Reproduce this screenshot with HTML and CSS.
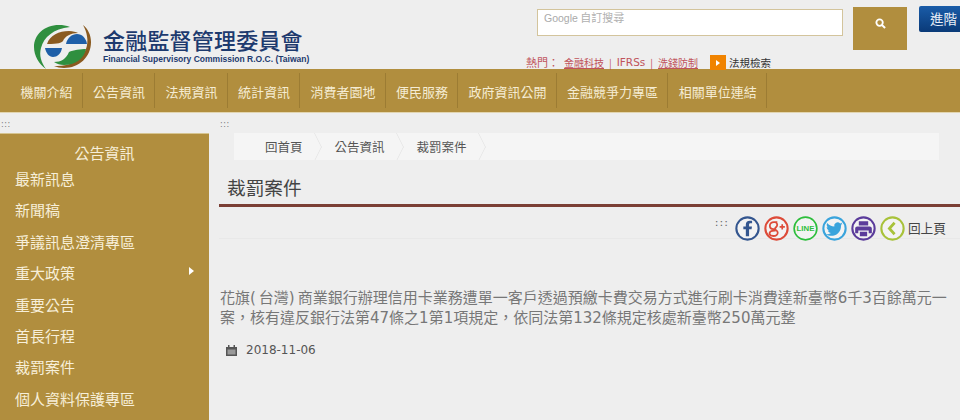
FILE: index.html
```html
<!DOCTYPE html>
<html lang="zh-Hant">
<head>
  <meta charset="UTF-8">
  <title>裁罰案件 - 金融監督管理委員會</title>
  <link rel="stylesheet" href="styles.css">
</head>
<body>
  <header class="header">
    <a class="brand" href="#">
      <svg class="brand-logo" width="62" height="46" viewBox="0 0 62 46">
        <path d="M26 1C11 1 1 11 1 23c0 9 5 17 12 22C8 38 6 31 8 24 11 13 20 5 37 3 33 1.500 30 1 26 1z" fill="#2f8f3f"/>
        <path d="M50 1c5 4 8 10 8 17 0 15-12 26-27 26-4 0-7-1-10-2 14 1 27-5 32-17 3-8 1-17-3-24z" fill="#8a5a20"/>
        <path d="M14 20c3-9 12-13 22-13 4 0 7 1 9 2-7 0-13 3-15 8-2 2-4 3-16 3z" fill="#8a5a20"/>
        <path d="M33 20c1-6 6-10 11-10 5 0 9 4 10 10z" fill="#1f5fa8"/>
        <path d="M12 24h17c-1 6-5 9-9 9-4 0-7-4-8-9z" fill="#1f5fa8"/>
        <path d="M21 38c7 0 12-3 15-10 4-2 12-3 17-3-2 10-11 16-22 16-4 0-7-1-10-3z" fill="#2f8f3f"/>
      </svg>
      <span class="brand-text">
        <span class="brand-zh">金融監督管理委員會</span>
        <span class="brand-en">Financial Supervisory Commission R.O.C. (Taiwan)</span>
      </span>
    </a>
    <div class="tools">
      <div class="search-row">
        <div class="search-input"><b>Google</b> 自訂搜尋</div>
        <button class="search-btn" aria-label="搜尋">
          <svg width="11" height="11" viewBox="0 0 12 12"><circle cx="5" cy="5" r="3.500" fill="none" stroke="#fff" stroke-width="2"/><path d="M7.500 7.500L11 11" stroke="#fff" stroke-width="2.200"/></svg>
        </button>
        <a class="advanced" href="#">進階</a>
      </div>
      <div class="hot-row">
        <span class="hot-label">熱門：</span>
        <a class="hot-link" href="#">金融科技</a><i>|</i>
        <a class="hot-link hot-latin" href="#">IFRSs</a><i>|</i>
        <a class="hot-link" href="#">洗錢防制</a>
        <span class="law-icon"></span>
        <a class="law-link" href="#">法規檢索</a>
      </div>
    </div>
  </header>

  <nav class="nav">
    <a href="#">機關介紹</a>
    <a href="#">公告資訊</a>
    <a href="#">法規資訊</a>
    <a href="#">統計資訊</a>
    <a href="#">消費者園地</a>
    <a href="#">便民服務</a>
    <a href="#">政府資訊公開</a>
    <a href="#">金融競爭力專區</a>
    <a href="#">相關單位連結</a>
  </nav>

  <div class="page">
    <aside class="side">
      <div class="dots">:::</div>
      <div class="side-box">
        <h2>公告資訊</h2>
        <ul>
          <li><a href="#">最新訊息</a></li>
          <li><a href="#">新聞稿</a></li>
          <li><a href="#">爭議訊息澄清專區</a></li>
          <li class="has-sub"><a href="#">重大政策</a></li>
          <li><a href="#">重要公告</a></li>
          <li><a href="#">首長行程</a></li>
          <li><a href="#">裁罰案件</a></li>
          <li><a href="#">個人資料保護專區</a></li>
        </ul>
      </div>
    </aside>

    <main class="main">
      <div class="dots">:::</div>
      <ol class="crumbs">
        <li><a href="#">回首頁</a></li>
        <li><a href="#">公告資訊</a></li>
        <li><a href="#">裁罰案件</a></li>
      </ol>
      <h1>裁罰案件</h1>
      <div class="share">
        <span class="share-dots">:::</span>
        <svg class="ico" viewBox="0 0 24 24"><circle cx="12" cy="12" r="10.700" fill="#f3f3f3" stroke="#34568f" stroke-width="2"/><path d="M13.500 19.500v-6.700h2.400l.4-2.800h-2.800V8.300c0-.9.300-1.400 1.400-1.400h1.500V4.500h-2.100c-2.600 0-3.900 1.500-3.900 3.600V10H8v2.800h2.400v6.700z" fill="#34568f"/></svg>
        <svg class="ico" viewBox="0 0 24 24"><circle cx="12" cy="12" r="10.700" fill="#f3f3f3" stroke="#dd4b39" stroke-width="2"/><path d="M12.800 5.800H9.500C7 5.800 5.600 7.500 5.600 9.300c0 1.900 1.500 3.200 3.400 3.200l.9 1.600c-2.700.1-4.600 1.100-4.600 2.800 0 1.400 1.600 2.300 3.700 2.300 2.700 0 4.200-1.500 4.200-3.100 0-2.300-2.700-2.600-2.700-3.900 0-1.100 2.200-1.500 2.200-3.800 0-1.200-.7-2-1.500-2.500" fill="none" stroke="#dd4b39" stroke-width="1.700"/><path d="M15 10.500h5M17.500 8v5" stroke="#dd4b39" stroke-width="1.600"/></svg>
        <svg class="ico" viewBox="0 0 24 24"><circle cx="12" cy="12" r="10.900" fill="#f3f3f3" stroke="#2dbe3c" stroke-width="1.600"/><text class="line-text" x="12" y="14.800" text-anchor="middle">LINE</text></svg>
        <svg class="ico" viewBox="0 0 24 24"><circle cx="12" cy="12" r="10.700" fill="#f3f3f3" stroke="#3aa4dc" stroke-width="2"/><path d="M20 7.600c-.6.300-1.200.5-1.900.6.700-.4 1.200-1.100 1.400-1.900-.6.400-1.300.7-2.100.8a3.300 3.300 0 0 0-5.600 3C9.100 9.900 6.700 8.600 5 6.600c-.9 1.500-.5 3.500 1 4.400-.5 0-1-.2-1.500-.4 0 1.600 1.100 3 2.600 3.300-.5.100-1 .1-1.500 0 .4 1.300 1.600 2.200 3 2.300-1.400 1.100-3.100 1.500-4.800 1.300 5.300 3.400 14.700 1 14.500-8.700.7-.5 1.300-1.100 1.700-1.200z" fill="#3aa4dc"/></svg>
        <svg class="ico" viewBox="0 0 24 24"><circle cx="12" cy="12" r="10.700" fill="#f3f3f3" stroke="#5b3c9b" stroke-width="2"/><path d="M7.500 5h9v4h-9zM6 10h12c1 0 2 .8 2 2v4.500h-3V14H7v2.500H4V12c0-1.200 1-2 2-2zM8.500 15h7v4.500h-7z" fill="#5b3c9b"/></svg>
        <svg class="ico" viewBox="0 0 24 24"><circle cx="12" cy="12" r="10.700" fill="#f3f3f3" stroke="#a8c23a" stroke-width="2"/><path d="M14 6.500L9 12l5 5.500" fill="none" stroke="#a8c23a" stroke-width="2.600"/></svg>
        <a class="back" href="#">回上頁</a>
      </div>
      <article class="article">
        <p class="summary">花旗(&thinsp;台灣)&thinsp;商業銀行辦理信用卡業務遭單一客戶透過預繳卡費交易方式進行刷卡消費達新臺幣6千3百餘萬元一案，核有違反銀行法第47條之1第1項規定，依同法第132條規定核處新臺幣250萬元整</p>
        <p class="date">
          <svg width="11" height="11" viewBox="0 0 11 11"><path d="M0 2h2V0h1.500v2h4V0H9v2h2v9H0z" fill="#555"/><path d="M1.500 4.500h8v5h-8z" fill="#999"/></svg>
          <span>2018-11-06</span>
        </p>
      </article>
    </main>
  </div>
</body>
</html>
```

FILE: styles.css
```css
* {
  margin: 0;
  padding: 0;
  box-sizing: border-box;
}

html,
body {
  height: 420px;
  overflow: hidden;
}

body {
  font-family: "DejaVu Sans", "Noto Sans CJK TC", sans-serif;
  background: #eeeeee;
  color: #555;
}

a {
  color: inherit;
  text-decoration: none;
}

ul,
ol {
  list-style: none;
}

.header {
  height: 69px;
  display: flex;
  justify-content: space-between;
}

.brand {
  display: flex;
  gap: 8px;
  padding: 24px 0 0 33px;
}

.brand-text {
  display: flex;
  flex-direction: column;
  padding-top: 3px;
}

.brand-zh {
  font-family: "Noto Sans CJK TC", sans-serif;
  font-size: 22px;
  line-height: 24px;
  font-weight: 500;
  letter-spacing: .2px;
  color: #1d3a6e;
  white-space: nowrap;
}

.brand-en {
  font-family: "Liberation Sans", sans-serif;
  font-size: 8.500px;
  line-height: 11px;
  margin-top: 3px;
  font-weight: 700;
  color: #1d3a6e;
  white-space: nowrap;
}

.tools {
  width: 434px;
  padding: 6px 0 0 11px;
  flex: none;
  margin-left: auto;
}

.search-row {
  display: flex;
  align-items: flex-start;
  height: 43px;
}

.search-input {
  width: 306px;
  height: 27px;
  margin-top: 3px;
  background: #fff;
  border: 1px solid #d3c49c;
  padding: 0 6px;
  font-family: "Noto Sans CJK TC", sans-serif;
  font-size: 11px;
  line-height: 14px;
  color: #b0b0b0;
}

.search-input b {
  font-family: "Liberation Sans", sans-serif;
  font-size: 10.500px;
  font-weight: 400;
  color: #aaa;
}

.search-btn {
  width: 54px;
  height: 43px;
  margin: 1px 0 0 10px;
  padding-bottom: 10px;
  background: #b18e3e;
  border: none;
  display: flex;
  align-items: center;
  justify-content: center;
}

.advanced {
  width: 41px;
  height: 26px;
  margin-left: 12px;
  background: linear-gradient(#1a5ca8, #0a3a78);
  color: #e8eef6;
  font-family: "Noto Sans CJK TC", sans-serif;
  font-size: 13.500px;
  line-height: 25px;
  padding-left: 11px;
  border-radius: 2px 0 0 2px;
  white-space: nowrap;
  overflow: hidden;
}

.hot-row {
  display: flex;
  align-items: center;
  height: 14px;
  margin: 6px 0 0 -11px;
  font-family: "Noto Sans CJK TC", sans-serif;
  font-size: 10px;
  color: #c0535b;
  white-space: nowrap;
}

.hot-label {
  width: 38px;
  font-size: 11px;
}

.hot-row i {
  font-style: normal;
  margin: 0 5px;
}

.hot-link {
  text-decoration: underline;
}

.hot-latin {
  font-family: "DejaVu Sans", sans-serif;
  font-size: 10.500px;
  text-decoration: none;
}

.law-icon {
  width: 16px;
  height: 15px;
  margin: 0 3px 0 12px;
  background: #f08300;
  position: relative;
}

.law-icon::after {
  content: "";
  position: absolute;
  left: 6px;
  top: 5px;
  border-left: 4px solid #fff;
  border-top: 3px solid transparent;
  border-bottom: 3px solid transparent;
}

.law-link {
  font-size: 10.500px;
  color: #333;
}

.nav {
  height: 44px;
  background: #b18e3e;
  border-bottom: 1px solid #e2d5b0;
  padding: 4px 0 4px 10px;
  display: flex;
  font-family: "Noto Sans CJK TC", sans-serif;
  font-size: 13px;
  color: #f5ecd3;
}

.nav a {
  display: block;
  height: 35px;
  line-height: 37px;
  padding: 0 9px 0 10.500px;
  border-right: 1px solid #9c7c33;
  white-space: nowrap;
}

.page {
  display: flex;
}

.dots {
  height: 20px;
  font-size: 8px;
  line-height: 23px;
  letter-spacing: .5px;
  padding-left: 1px;
  color: #777;
}

.side {
  width: 209px;
  flex: none;
}

.side-box {
  height: 300px;
  background: #b18e3e;
  border-top: 1px solid #d6c490;
  color: #f7efd9;
  font-family: "Noto Sans CJK TC", sans-serif;
  font-size: 15px;
}

.side-box h2 {
  font-size: 15px;
  font-weight: 400;
  line-height: 22px;
  text-align: center;
  padding-top: 8px;
  height: 30px;
}

.side-box li {
  height: 31.400px;
  line-height: 29px;
  padding-left: 15px;
  position: relative;
}

.has-sub::after {
  content: "";
  position: absolute;
  left: 189px;
  top: 9px;
  border-left: 5px solid #fff;
  border-top: 4px solid transparent;
  border-bottom: 4px solid transparent;
}

.main {
  flex: 1;
  padding-left: 10px;
}

.crumbs {
  display: flex;
  height: 27px;
  margin: 0 21px 0 15px;
  background: #f5f5f5;
  padding-left: 31px;
  font-family: "Noto Sans CJK TC", sans-serif;
  font-size: 12.500px;
  line-height: 27px;
  overflow: hidden;
}

.crumbs li {
  position: relative;
  padding-right: 32px;
}

.crumbs li::after {
  content: "";
  position: absolute;
  right: 10px;
  top: 3px;
  width: 21px;
  height: 21px;
  border-top: 1px solid #e2e2e2;
  border-right: 1px solid #e2e2e2;
  transform: scaleX(.5) rotate(45deg);
}

h1 {
  font-family: "Noto Sans CJK TC", sans-serif;
  font-size: 18.700px;
  font-weight: 400;
  line-height: 26px;
  height: 47px;
  padding: 14px 0 0 8px;
  border-bottom: 3px solid #7b3f35;
  color: #444;
}

.share {
  height: 32px;
  padding: 9px 14px 0 0;
  display: flex;
  align-items: flex-start;
  justify-content: flex-end;
  gap: 4px;
  border-bottom: 1px solid #e8e8e8;
}

.share-dots {
  font-size: 11px;
  font-weight: 400;
  line-height: 14px;
  letter-spacing: 1px;
  color: #666;
  margin-right: 2px;
}

.ico {
  width: 25px;
  height: 25px;
  flex: none;
}

.line-text {
  font-family: "Liberation Sans", sans-serif;
  font-size: 7.500px;
  font-weight: 700;
  fill: #2dbe3c;
}

.back {
  font-family: "Noto Sans CJK TC", sans-serif;
  font-size: 12.700px;
  line-height: 24px;
  color: #444;
  margin-left: -1px;
}

.article {
  padding: 49px 4px 0 1px;
}

.summary {
  font-size: 15px;
  line-height: 20px;
  color: #777;
}

.date {
  display: flex;
  align-items: center;
  gap: 9px;
  margin: 14px 0 0 6px;
  font-size: 12px;
  line-height: 16px;
  color: #555;
}
```
